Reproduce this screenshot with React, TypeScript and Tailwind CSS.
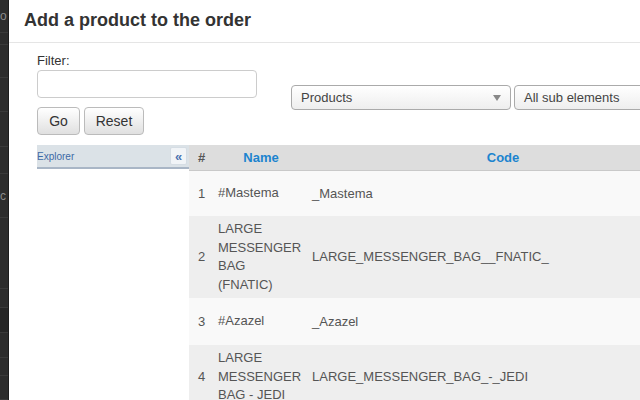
import React from "react";

const rows = [
  { n: 1, name: ["#Mastema"], code: "_Mastema", h: "h-[46px]", bg: "bg-[#f9f9f9]" },
  { n: 2, name: ["LARGE", "MESSENGER", "BAG", "(FNATIC)"], code: "LARGE_MESSENGER_BAG__FNATIC_", h: "h-[82px]", bg: "bg-[#eeeeee]" },
  { n: 3, name: ["#Azazel"], code: "_Azazel", h: "h-[47px]", bg: "bg-[#f9f9f9]" },
  { n: 4, name: ["LARGE", "MESSENGER", "BAG - JEDI"], code: "LARGE_MESSENGER_BAG_-_JEDI", h: "h-[64px]", bg: "bg-[#eeeeee]" },
];

// backdrop slice visible to the left of the modal
const stripe = [
  { h: "h-[33px]", t: "o" },
  { h: "h-[12px]" },
  { h: "h-[33px]" },
  { h: "h-[34px]" },
  { h: "h-[35px]" },
  { h: "h-[27px]" },
  { h: "h-[44px]", t: "c" },
  { h: "h-[71px]" },
  { h: "h-[19px]" },
  { h: "h-[25px]", dark: true },
  { h: "h-[25px]" },
  { h: "h-[18px]" },
  { h: "h-[24px]" },
];

function Select({ label, arrow, w }: { label: string; arrow?: boolean; w: string }) {
  return (
    <div className={`${w} h-[25px] shrink-0 flex items-center justify-between pl-[9px] pr-[9px] rounded-[4px] border border-[#aaa] bg-gradient-to-b from-white to-[#eeeeee] text-[13px] text-[#444]`}>
      <span>{label}</span>
      {arrow && <span className="w-0 h-0 border-l-[4px] border-r-[4px] border-t-[6px] border-l-transparent border-r-transparent border-t-[#888]" />}
    </div>
  );
}

export default function App() {
  return (
    <div className="w-[640px] h-[400px] flex overflow-hidden bg-white" style={{ fontFamily: '"Liberation Sans", Arial, sans-serif' }}>
      <div className="w-[9px] shrink-0 flex flex-col bg-[#2c2c2c] border-r border-[#1c1c1c] overflow-hidden">
        {stripe.map((s, i) => (
          <div key={i} className={`${s.h} shrink-0 border-b border-[#3a3a3a] flex items-center justify-start overflow-hidden ${s.dark ? "bg-[#262626]" : ""}`}>
            {s.t && <span className="text-[12px] leading-none text-[#8a8a8a] whitespace-nowrap">{s.t}</span>}
          </div>
        ))}
      </div>

      <div className="flex-1 min-w-0 flex flex-col overflow-hidden">
        <div className="h-[43px] shrink-0 border-b border-[#e5e5e5] pl-[15px] flex items-center">
          <h1 className="text-[18px] font-bold text-[#333] leading-none -mt-[2px]">Add a product to the order</h1>
        </div>

        <div className="pl-[28px] pt-[9px] flex flex-col">
          <div className="flex items-start">
            <div className="w-[220px] shrink-0 flex flex-col">
              <label className="text-[13px] text-[#333] leading-[18px]">Filter:</label>
              <div className="h-[28px] rounded-[4px] border border-[#ccc] bg-white" />
              <div className="mt-[9px] flex gap-[4px]">
                <button className="w-[43px] h-[28px] rounded-[4px] border border-[#bbb] bg-gradient-to-b from-white to-[#e0e0e0] text-[14px] text-[#333]">Go</button>
                <button className="w-[60px] h-[28px] rounded-[4px] border border-[#bbb] bg-gradient-to-b from-white to-[#e0e0e0] text-[14px] text-[#333]">Reset</button>
              </div>
            </div>
            <div className="ml-[34px] mt-[33px] flex gap-[3px]">
              <Select label="Products" arrow w="w-[220px]" />
              <Select label="All sub elements" w="w-[160px]" />
            </div>
          </div>

          <div className="mt-[10px] flex items-start">
            <div className="w-[152px] shrink-0 h-[24px] bg-[#dbe2e7] border-b-2 border-[#a9b6c6] flex items-center justify-between pr-[2px]">
              <span className="text-[10px] text-[#3b69a6] mt-[1px]">Explorer</span>
              <button className="w-[17px] h-[18px] bg-[#f1f4f7] border border-[#d5dde4] rounded-[2px] text-[13px] leading-none font-bold text-[#4a72b0] flex items-center justify-center">«</button>
            </div>
            <table className="w-[509px] shrink-0 border-collapse text-[13px] text-[#555]">
              <thead>
                <tr className="h-[25px] bg-[#dddddd] border-b border-[#c9c9c9]">
                  <th className="w-[25px] font-bold text-[#555] text-center">#</th>
                  <th className="w-[94px] font-bold text-[#1b84cf] text-center">Name</th>
                  <th className="font-bold text-[#1b84cf] text-center">Code</th>
                </tr>
              </thead>
              <tbody>
                {rows.map((r) => (
                  <tr key={r.n} className={`${r.h} ${r.bg}`}>
                    <td className="text-center align-middle">{r.n}</td>
                    <td className="pl-[4px] align-middle leading-[18.5px]">
                      {r.name.map((l, i) => (
                        <div key={i} className="whitespace-nowrap">{l}</div>
                      ))}
                    </td>
                    <td className="pl-[4px] align-middle">{r.code}</td>
                  </tr>
                ))}
              </tbody>
            </table>
          </div>
        </div>
      </div>
    </div>
  );
}
